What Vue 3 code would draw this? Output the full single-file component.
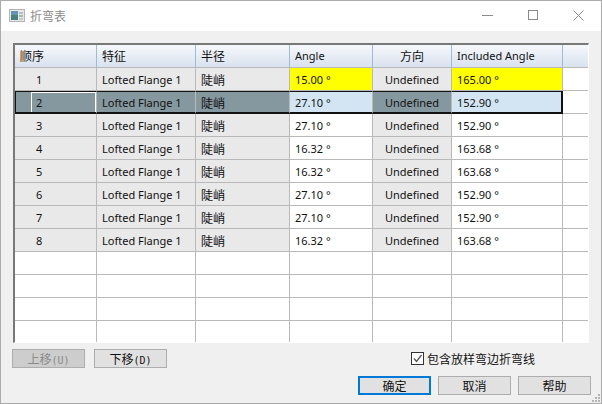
<script setup>
const columns = [
  { label: '顺序' },
  { label: '特征' },
  { label: '半径' },
  { label: 'Angle' },
  { label: '方向', align: 'center' },
  { label: 'Included Angle' },
]
const rows = [
  ['1', '15.00 °', '165.00 °'],
  ['2', '27.10 °', '152.90 °'],
  ['3', '27.10 °', '152.90 °'],
  ['4', '16.32 °', '163.68 °'],
  ['5', '16.32 °', '163.68 °'],
  ['6', '27.10 °', '152.90 °'],
  ['7', '27.10 °', '152.90 °'],
  ['8', '16.32 °', '163.68 °'],
]
const blanks = [1, 2, 3, 4]
const grip = [1, 2, 3, 4, 5, 6]
</script>

<template>
  <div class="window">
    <header class="titlebar">
      <div class="title">
        <svg class="app-icon" width="16" height="13" viewBox="0 0 16 13">
          <rect x="0.5" y="0.5" width="15" height="12" fill="#e8e8e8" stroke="#b4b4b4" />
          <rect x="2" y="2" width="7" height="9" fill="#47807c" />
          <rect x="2" y="2" width="7" height="4" fill="#6695b3" />
          <rect x="10" y="3" width="4" height="2" fill="#b3c0c9" />
          <rect x="10" y="6" width="4" height="2" fill="#9db9ab" />
          <rect x="10" y="9" width="4" height="2" fill="#c0c9ce" />
        </svg>
        <span>折弯表</span>
      </div>
      <div class="window-controls">
        <svg width="11" height="10" viewBox="0 0 11 10"><path d="M0 5.5H11" stroke="#8a8a8a" /></svg>
        <svg width="10" height="10" viewBox="0 0 10 10"><rect x="0.5" y="0.5" width="9" height="9" fill="none" stroke="#8a8a8a" /></svg>
        <svg width="11" height="11" viewBox="0 0 11 11"><path d="M0.5 0.5L10.5 10.5M10.5 0.5L0.5 10.5" stroke="#8a8a8a" /></svg>
      </div>
    </header>

    <main class="content">
      <section class="table">
        <div class="row head">
          <div v-for="(c, i) in columns" :key="i" class="cell" :class="{ center: c.align === 'center', latin: i === 3 || i === 5 }">
            <span class="sort-mark" v-if="i === 0"></span>{{ c.label }}
          </div>
          <div class="cell filler"></div>
        </div>

        <div v-for="(r, idx) in rows" :key="r[0]" class="row" :class="{ selected: idx === 1, warn: idx === 0 }">
          <div class="cell fixed num"><span class="focus">{{ r[0] }}</span></div>
          <div class="cell fixed">Lofted Flange 1</div>
          <div class="cell fixed cjk">陡峭</div>
          <div class="cell edit">{{ r[1] }}</div>
          <div class="cell fixed center">Undefined</div>
          <div class="cell edit">{{ r[2] }}</div>
          <div class="cell filler"></div>
        </div>

        <div v-for="b in blanks" :key="'b' + b" class="row blank">
          <div v-for="n in 6" :key="n" class="cell"></div>
          <div class="cell filler"></div>
        </div>
      </section>

      <div class="move-row">
        <div class="move-buttons">
          <button class="btn disabled">上移<span class="key">(U)</span></button>
          <button class="btn">下移<span class="key">(D)</span></button>
        </div>
        <label class="check">
          <span class="box">
            <svg width="11" height="11" viewBox="0 0 11 11"><path d="M2 5.5L4.5 8.5L9.5 2" fill="none" stroke="#555" stroke-width="1.3" /></svg>
          </span>
          包含放样弯边折弯线
        </label>
      </div>

      <div class="actions">
        <button class="btn primary">确定</button>
        <button class="btn">取消</button>
        <button class="btn">帮助</button>
      </div>

      <div class="grip">
        <i v-for="g in grip" :key="g" :class="'g' + g"></i>
      </div>
    </main>
  </div>
</template>

<style>
html, body { margin: 0; padding: 0; background: #fff; }
</style>

<style scoped>
.window {
  width: 602px;
  height: 404px;
  box-sizing: border-box;
  border: 1px solid #ababab;
  display: flex;
  flex-direction: column;
  font-family: "Noto Sans", "Noto Sans CJK SC", sans-serif;
  font-size: 12px;
  color: #111;
  overflow: hidden;
}
.titlebar {
  height: 30px;
  box-sizing: border-box;
  padding-bottom: 2px;
  flex: none;
  background: #fff;
  display: flex;
  align-items: center;
  justify-content: space-between;
}
.title {
  display: flex;
  align-items: center;
  gap: 5px;
  padding-left: 8px;
  color: #8c8c8c;
  font-family: "Noto Sans CJK SC", sans-serif;
  font-size: 12px;
}
.window-controls {
  display: flex;
  align-items: center;
  gap: 35px;
  padding-right: 17px;
}
.content {
  flex: 1;
  position: relative;
  background: #f0f0f0;
  padding: 12px 11px 0 11px;
  min-height: 0;
}
.table {
  width: 576px;
  height: 300px;
  margin-left: 1px;
  box-sizing: border-box;
  background: #fff;
  border-top: 2px solid #787878;
  border-left: 2px solid #787878;
  border-right: 1px solid #fff;
  border-bottom: 1px solid #fff;
  overflow: hidden;
}
.row {
  display: grid;
  grid-template-columns: 82px 99px 94px 83px 79px 111px 1fr;
  height: 23px;
}
.cell {
  box-sizing: border-box;
  border-right: 1px solid #b9b9b9;
  border-bottom: 1px solid #b9b9b9;
  padding-left: 5px;
  line-height: 24px;
  white-space: nowrap;
  overflow: hidden;
  font-size: 11px;
  background: #fff;
}
.cell.filler { border-right: none; }
.center { text-align: center; padding-left: 0; }
.num { padding-left: 21px; }
.cjk { font-family: "Noto Sans CJK SC", sans-serif; font-size: 12px; line-height: 23px; }
.fixed { background: #e9e9e9; }

.head .cell {
  background: linear-gradient(#f6f8fb, #d9e2ef);
  border-right: 1px solid #9fbbd8;
  border-bottom: 1px solid #b9b9b9;
  font-family: "Noto Sans CJK SC", sans-serif;
  font-size: 12px;
  line-height: 22px;
  position: relative;
}
.head .cell.latin { font-family: "Noto Sans", sans-serif; font-size: 11px; }
.head .cell.filler { border-right: none; }
.sort-mark {
  position: absolute;
  left: 5px;
  top: 6px;
  width: 5px;
  height: 11px;
  background: linear-gradient(90deg, #d98a45, #c98f55 50%, #6f94c8);
  opacity: 0.8;
}

.warn .cell.edit { background: #ffff00; }
.selected .cell:not(.filler) {
  border-top: 1px solid #111;
  border-bottom: 2px solid #111;
  line-height: 21px;
}
.selected .cell.fixed { background: #85979f; }
.selected .cell.edit { background: #d3e5f3; }
.selected .cell:nth-child(6) { border-right: 2px solid #111; }
.selected .cell.num { border-left: 1px solid #111; padding-left: 15px; }
.selected .focus {
  display: block;
  border: 1px solid #fff;
  height: 21px;
  line-height: 20px;
  padding-left: 4px;
  box-sizing: border-box;
}

.move-row {
  display: flex;
  justify-content: space-between;
  align-items: center;
  margin-top: 5px;
  height: 20px;
  padding-right: 55px;
}
.move-buttons { display: flex; gap: 9px; }
.btn {
  width: 73px;
  height: 19px;
  box-sizing: border-box;
  border: 1px solid #adadad;
  background: #e1e1e1;
  font-family: "Noto Sans CJK SC", sans-serif;
  font-size: 12px;
  color: #111;
  padding: 0;
  line-height: 17px;
}
.key { font-family: "DejaVu Sans Mono", monospace; font-size: 10px; }
.btn.disabled { background: #cdcdcd; color: #8a8a8a; }
.btn.primary { border: 2px solid #0078d7; line-height: 15px; }
.check {
  display: flex;
  align-items: center;
  gap: 3px;
  font-family: "Noto Sans CJK SC", sans-serif;
  font-size: 12px;
}
.box {
  width: 13px;
  height: 13px;
  box-sizing: border-box;
  border: 1px solid #333;
  background: #fff;
  display: flex;
  align-items: center;
  justify-content: center;
}
.actions {
  display: flex;
  justify-content: flex-end;
  gap: 7px;
  margin-top: 8px;
  margin-right: -1px;
}
.grip {
  position: absolute;
  right: 1px;
  bottom: 1px;
  width: 8px;
  height: 8px;
}
.grip i {
  position: absolute;
  width: 2px;
  height: 2px;
  background: #b5b5b5;
}
.g1 { right: 0; bottom: 6px; }
.g2 { right: 3px; bottom: 3px; }
.g3 { right: 0; bottom: 3px; }
.g4 { right: 6px; bottom: 0; }
.g5 { right: 3px; bottom: 0; }
.g6 { right: 0; bottom: 0; }
</style>
